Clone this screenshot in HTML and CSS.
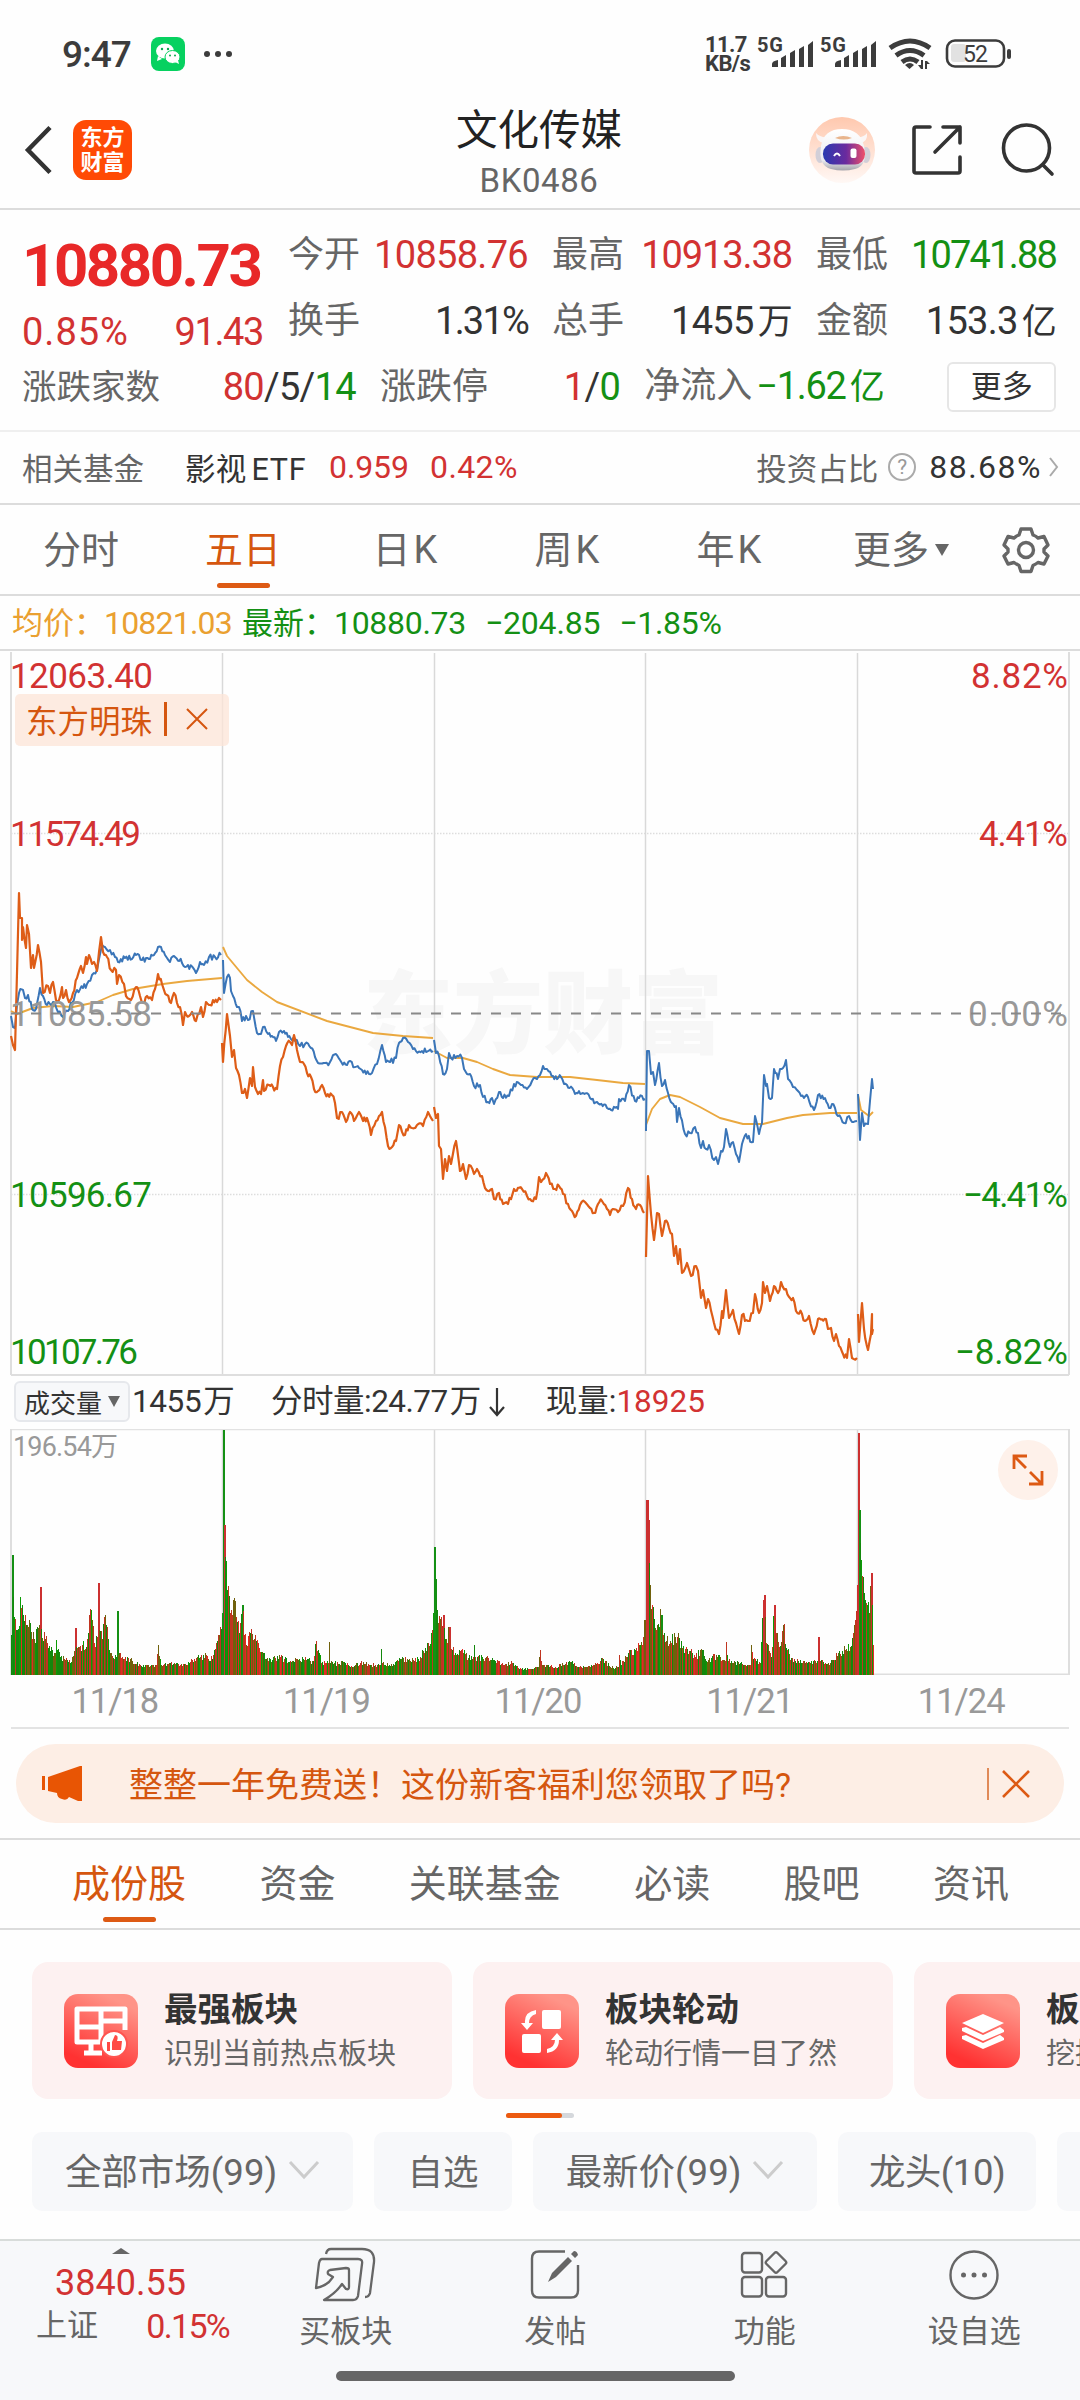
FILE: index.html
```html
<!DOCTYPE html>
<html lang="zh-CN">
<head>
    <meta charset="UTF-8">
    <meta name="viewport" content="width=device-width, initial-scale=1.0">
    <title>文化传媒 BK0486</title>
    <link rel="stylesheet" href="styles.css">
</head>
<body>
    <div class="status-bar">
        <span class="time">9:47</span>
        <svg class="wechat" width="34" height="34" viewBox="0 0 34 34">
            <rect width="34" height="34" rx="8" fill="#07d160"/>
            <ellipse cx="14" cy="14" rx="9" ry="7.5" fill="#fff"/>
            <path d="M7 19l-1 5 5-2z" fill="#fff"/>
            <ellipse cx="21.500" cy="20" rx="7.500" ry="6.500" fill="#fff" stroke="#07d160" stroke-width="1"/>
            <path d="M24 25l4 2-1-4z" fill="#fff"/>
            <g fill="#07a94e"><circle cx="11" cy="12" r="1.200"/><circle cx="17" cy="12" r="1.200"/><circle cx="19" cy="18.500" r="1"/><circle cx="24" cy="18.500" r="1"/></g>
        </svg>
        <svg class="dots" width="30" height="10" viewBox="0 0 30 10" fill="#3c3c3c"><circle cx="4" cy="5" r="3"/><circle cx="15" cy="5" r="3"/><circle cx="26" cy="5" r="3"/></svg>
        <div class="net-speed"><div>11.7</div><div>KB/s</div></div>
        <svg width="310" height="40" viewBox="755 34 310 40" fill="#3c3c3c">
            <g id="signal">
                <text x="757" y="52" class="sim" textLength="26">5G</text>
                <path d="M772 67v-3q0-3 6-4v7zM781 67v-9l5-3v12zM790 67v-14l5-3v17zM799 67v-18l5-3v21zM808 67v-22l5-4v26z"/>
            </g>
            <use href="#signal" x="63"/>
            <g fill="none" stroke="#3c3c3c" stroke-width="5">
                <path d="M890 48q20-14 40 0M896 55.500q14-10 28 0M902 62q8-6 16 0"/>
            </g>
            <path d="M905 65q5-4 9 0l-4.500 4zM923 60v9h-2l-3-4h3v-5zM925 61v8h2v-5h3l-3-3z"/>
            <rect x="951" y="44" width="15" height="18" rx="3" fill="#e2e2e2"/>
            <rect x="947" y="40.500" width="57" height="26" rx="8" fill="none" stroke="#3c3c3c" stroke-width="2.600"/>
            <rect x="1007" y="49" width="4" height="10" rx="2"/>
            <text x="963" y="62" class="battery" textLength="25">52</text>
        </svg>
    </div>

    <div class="navbar">
        <svg class="back" width="28" height="50" viewBox="0 0 28 50" fill="none" stroke="#333" stroke-width="4.500"><path d="M26 2.500L4 25l22 22.500"/></svg>
        <div class="logo">东方<br>财富</div>
        <div class="title">
            <h1>文化传媒</h1>
            <p>BK0486</p>
        </div>
        <svg class="robot" width="66" height="66" viewBox="0 0 66 66">
            <defs>
                <linearGradient id="halo" x2="0" y2="1"><stop offset="0" stop-color="#ffc8ae"/><stop offset="1" stop-color="#fff8f5"/></linearGradient>
                <linearGradient id="face"><stop offset="0" stop-color="#2a3ab0"/><stop offset=".55" stop-color="#6a2a9e"/><stop offset="1" stop-color="#f0506a"/></linearGradient>
                <linearGradient id="shell" x2="0" y2="1"><stop offset="0" stop-color="#fff"/><stop offset=".75" stop-color="#ececf0"/><stop offset="1" stop-color="#a3a3ab"/></linearGradient>
            </defs>
            <circle cx="33" cy="33" r="33" fill="url(#halo)"/>
            <path d="M7 16q0 9 8 10l5-6q-9 1-13-4zM58 16q1 9-7 10l-5-6q9 1 12-4z" fill="#fbf6f6"/>
            <ellipse cx="11" cy="38" rx="4.500" ry="8" fill="#d2cfd8"/>
            <ellipse cx="57" cy="38" rx="4.500" ry="8" fill="#d2cfd8"/>
            <path d="M12 29Q15 12 33 12t22 17q4 20-9 23-12 3-24 0Q9 49 12 29z" fill="url(#shell)"/>
            <path d="M26 21q8-4 17 0-8 3-17 0z" fill="#e8b48c"/>
            <rect x="14" y="26.500" width="42" height="21" rx="10" fill="url(#face)"/>
            <path d="M25 39q3-5 6 0" fill="none" stroke="#fff" stroke-width="2"/>
            <rect x="41.500" y="31.500" width="6" height="9.500" rx="2" fill="#fff"/>
        </svg>
        <svg class="share" width="54" height="54" viewBox="0 0 54 54" fill="none" stroke="#333" stroke-width="3.600" stroke-linecap="round" stroke-linejoin="round"><path d="M20 4H6q-2 0-2 2v42q0 2 2 2h42q2 0 2-2V34M33 4h17v16M50 4L25 29"/></svg>
        <svg class="search" width="54" height="54" viewBox="0 0 54 54" fill="none" stroke="#333" stroke-width="3.600" stroke-linecap="round"><circle cx="25.500" cy="25" r="23"/><path d="M42 42l9 9"/></svg>
    </div>

    <div class="quote">
        <div class="price">
            <div class="last red">10880.73</div>
            <div class="change red"><span class="pct">0.85%</span><span>91.43</span></div>
        </div>
        <div class="stats">
            <div class="stat"><label>今开</label><span class="red">10858.76</span></div>
            <div class="stat"><label>最高</label><span class="red high">10913.38</span></div>
            <div class="stat narrow"><label>最低</label><span class="green">10741.88</span></div>
            <div class="stat narrow"><label>换手</label><span>1.31%</span></div>
            <div class="stat"><label>总手</label><span>1455<i>万</i></span></div>
            <div class="stat"><label>金额</label><span>153.3<i>亿</i></span></div>
        </div>
        <div class="breadth">
            <div class="stat updown"><label>涨跌家数</label><span><b class="red">80</b>/5/<b class="green">14</b></span></div>
            <div class="stat limit"><label>涨跌停</label><span><b class="red">1</b>/<b class="green">0</b></span></div>
            <div class="stat inflow"><label>净流入</label><span class="green">−1.62<i>亿</i></span></div>
            <button class="more-btn">更多</button>
        </div>
    </div>

    <div class="fund">
        <label>相关基金</label>
        <span class="fund-name">影视<i>ETF</i></span>
        <span class="red fund-price">0.959</span>
        <span class="red fund-pct">0.42%</span>
        <div class="ratio">
            <label>投资占比</label>
            <span class="help">?</span>
            <span class="ratio-num">88.68%</span>
            <svg width="10" height="20" viewBox="0 0 10 20" fill="none" stroke="#aaa" stroke-width="2"><path d="M1 1l7 9-7 9"/></svg>
        </div>
    </div>

    <div class="period-tabs">
        <div class="tab">分时</div>
        <div class="tab active">五日</div>
        <div class="tab">日<i>K</i></div>
        <div class="tab">周<i>K</i></div>
        <div class="tab">年<i>K</i></div>
        <div class="tab">更多<svg width="14" height="12" viewBox="0 0 14 12"><path d="M0 0h14L7 12z" fill="#666"/></svg></div>
        <svg class="gear" width="48" height="48" viewBox="-24 -24 48 48" fill="none" stroke="#666" stroke-width="3.400" stroke-linejoin="round">
            <path d="M-5-21H5L7-15Q10-14 12-12L18-13.500 22-5 18-1V2L22 6 18 14 12 12.500Q10 14 7 15.500L5 21.500H-5L-7 15.500Q-10 14-12 12.500L-18 14-22 6-18 2V-1L-22-5-18-13.500-12-12Q-10-14-7-15z"/>
            <circle r="7.500"/>
        </svg>
    </div>

    <div class="legend">
        <span class="avg name">均价：</span><span class="avg avg-num">10821.03</span>
        <span class="green name">最新：</span><span class="green">10880.73</span>
        <span class="green diff">−204.85</span>
        <span class="green">−1.85%</span>
    </div>

    <div class="price-chart">
        <svg id="priceChart" width="1080" height="725" viewBox="0 650 1080 725">
            <text x="363" y="1045" class="watermark" textLength="360">东方财富</text>
            <path class="grid dotted" d="M11 832.500H1069M11 1193.500H1069"/>
            <path class="grid side" d="M11 651V1374M1069 651V1374"/>
            <path class="grid" d="M222.500 652V1374M434.500 652V1374M645.500 652V1374M857.500 652V1374"/>
            <path class="grid bottom" d="M11 1374H1069"/>
            <g id="lines"></g>
            <g class="axis">
                <text x="10" y="687" class="up" textLength="143">12063.40</text>
                <text x="10" y="845" class="up" textLength="131">11574.49</text>
                <text x="10" y="1025" class="flat" textLength="142">11085.58</text>
                <text x="10" y="1206" class="down" textLength="142">10596.67</text>
                <text x="10" y="1363" class="down" textLength="128">10107.76</text>
                <text x="971" y="687" class="up" textLength="97">8.82%</text>
                <text x="979" y="845" class="up" textLength="89">4.41%</text>
                <text x="968" y="1025" class="flat" textLength="100">0.00%</text>
                <text x="963" y="1206" class="down" textLength="105">−4.41%</text>
                <text x="955" y="1363" class="down" textLength="113">−8.82%</text>
            </g>
            <path d="M11 1012.500H1069" stroke="#888" stroke-width="1.800" stroke-dasharray="10 10"/>
        </svg>
        <div class="compare-tag">东方明珠<span class="bar"></span><svg width="22" height="22" viewBox="0 0 22 22" stroke="#d5560f" stroke-width="2"><path d="M1 1l20 20M21 1L1 21"/></svg></div>
    </div>

    <div class="volume-head">
        <button class="indicator">成交量<svg width="12" height="11" viewBox="0 0 12 11"><path d="M0 0h12L6 11z" fill="#666"/></svg></button>
        <span class="vol-total">1455<i>万</i></span>
        <span class="vol-minute">分时量:24.77<i>万</i></span>
        <svg class="arrow" width="16" height="30" viewBox="0 0 16 30" fill="none" stroke="#333" stroke-width="2.200"><path d="M8 1v27M1 20l7 8 7-8"/></svg>
        <span>现量:<b class="red">18925</b></span>
    </div>

    <div class="volume-chart">
        <svg width="1080" height="246" viewBox="0 1429 1080 246">
            <path class="grid" d="M222.500 1430V1675M434.500 1430V1675M645.500 1430V1675M857.500 1430V1675"/>
            <path class="grid light" d="M11 1429.500H1069"/>
            <path class="grid side" d="M11 1429V1675M1069 1429V1675M11 1674.500H1069"/>
            <g id="bars" shape-rendering="crispEdges"></g>
            <text x="13" y="1456" class="vol-max" textLength="105">196.54万</text>
        </svg>
        <div class="expand"><svg width="32" height="32" viewBox="0 0 32 32" fill="none" stroke="#dd5a14" stroke-width="2.800"><path d="M2 15V2h13M2 2l12 12M17 30h13V17M30 30L18 18"/></svg></div>
    </div>
    <div class="dates"><span>11/18</span><span>11/19</span><span>11/20</span><span>11/21</span><span>11/24</span></div>

    <div class="banner">
        <svg width="40" height="36" viewBox="0 0 40 36" fill="#e85504"><path d="M0 10h3v14H0zM6 11L38 0h2v35h-4l-9-4q-2 4-7 2-5-1-5-6l-9-2z"/></svg>
        <p>整整一年免费送！这份新客福利您领取了吗?</p>
        <span class="sep"></span>
        <svg class="close" width="30" height="30" viewBox="0 0 30 30" stroke="#dd5a14" stroke-width="2.600"><path d="M2 2l26 26M28 2L2 28"/></svg>
    </div>

    <div class="section-tabs">
        <div class="tab active">成份股</div>
        <div class="tab">资金</div>
        <div class="tab">关联基金</div>
        <div class="tab">必读</div>
        <div class="tab">股吧</div>
        <div class="tab">资讯</div>
    </div>

    <div class="cards">
        <div class="card">
            <div class="card-icon">
                <svg width="74" height="74" viewBox="0 0 74 74" fill="none" stroke="#fff" stroke-width="5">
                    <path d="M61 36V15H13v33h28M37 15v33M13 33h24M37 27h24M27 50v9M20 59h18" stroke-linejoin="round"/>
                    <circle cx="50" cy="50" r="13" fill="#fff" stroke="#ff5450" stroke-width="2"/>
                    <path d="M43 48h3v9h-3zM48 56v-8l3-7q4 0 2 6h5l-1 9z" fill="#ff4a45" stroke="none"/>
                </svg>
            </div>
            <div class="card-text"><h3>最强板块</h3><p>识别当前热点板块</p></div>
        </div>
        <div class="card">
            <div class="card-icon">
                <svg width="74" height="74" viewBox="0 0 74 74" fill="#fff">
                    <rect x="37" y="16" width="19" height="19" rx="2"/><rect x="17" y="40" width="19" height="19" rx="2"/>
                    <path d="M31 16q-12 2-11 13h-4l6 7 6-7h-4q0-7 7-9zM42 59q12-2 12-13h4l-6-7-6 7h4q0 7-8 9z"/>
                </svg>
            </div>
            <div class="card-text"><h3>板块轮动</h3><p>轮动行情一目了然</p></div>
        </div>
        <div class="card">
            <div class="card-icon">
                <svg width="74" height="74" viewBox="0 0 74 74" fill="#fff">
                    <path d="M37 20l21 9-21 10-21-10z"/><path d="M16 34l4-1 17 8 17-8 4 3v2L37 47 16 37zM16 42l4-1 17 8 17-8 4 3v2L37 55 16 45z"/>
                </svg>
            </div>
            <div class="card-text"><h3>板块</h3><p>挖掘</p></div>
        </div>
    </div>
    <div class="pager"><span></span></div>

    <div class="chips">
        <div class="chip market">全部市场(99)<svg width="32" height="20" viewBox="0 0 32 20" fill="none" stroke="#ccc" stroke-width="3"><path d="M2 2l14 15L30 2"/></svg></div>
        <div class="chip self">自选</div>
        <div class="chip latest">最新价(99)<svg width="32" height="20" viewBox="0 0 32 20" fill="none" stroke="#ccc" stroke-width="3"><path d="M2 2l14 15L30 2"/></svg></div>
        <div class="chip leader">龙头(10)</div>
        <div class="chip rest"></div>
    </div>

    <div class="bottom-bar">
        <div class="index">
            <svg width="18" height="6" viewBox="0 0 18 6"><path d="M9 0l9 6H0z" fill="#666"/></svg>
            <div class="index-value red">3840.55</div>
            <div class="index-row"><span>上证</span><span class="red">0.15%</span></div>
        </div>
        <div class="action">
            <svg width="64" height="56" viewBox="0 0 64 56" fill="none" stroke="#666" stroke-width="2.300" stroke-linejoin="round">
                <path d="M12 7q1-5 5-5h31q13 0 12 13l-4 31q-1 4-5 4M8 12h36q5 0 4 5l-4 32q-1 4-5 4H10Q22 46 28 37l4 5q3 1 3-2V23q0-2-3-2l-16 2q-3 1-2 4l5 3-4 5Q9 40 2 41L5 16q1-4 3-4z"/>
            </svg>
            <span>买板块</span>
        </div>
        <div class="action">
            <svg width="64" height="56" viewBox="0 0 64 56" fill="none" stroke="#666" stroke-width="2.400">
                <path d="M42 4.500H16q-7 0-7 7v32q0 7 7 7h32q7 0 7-7V18"/>
                <path d="M25 35l4-9L45 10l4 4-16 16zM48 7l3-3q3 0 4 4l-3 3z" fill="#666" stroke="none"/>
            </svg>
            <span>发帖</span>
        </div>
        <div class="action">
            <svg width="64" height="56" viewBox="0 0 64 56" fill="none" stroke="#666" stroke-width="2.400" stroke-linejoin="round">
                <rect x="9" y="6" width="20" height="19.500" rx="3"/><rect x="9" y="30" width="20" height="19.500" rx="3"/><rect x="33" y="30" width="20" height="19.500" rx="3"/>
                <path d="M41.500 6q1.500-1.500 3 0l8 8q1.500 1.500 0 3l-8 8q-1.500 1.500-3 0l-8-8q-1.500-1.500 0-3z"/>
            </svg>
            <span>功能</span>
        </div>
        <div class="action">
            <svg width="64" height="56" viewBox="0 0 64 56" fill="#666">
                <circle cx="32" cy="28" r="23.500" fill="none" stroke="#666" stroke-width="2.400"/>
                <circle cx="21.500" cy="28" r="2.500"/><circle cx="32" cy="28" r="2.500"/><circle cx="42.500" cy="28" r="2.500"/>
            </svg>
            <span>设自选</span>
        </div>
    </div>
    <div class="home"><span></span></div>

    <script src="chart.js"></script>
</body>
</html>
```

FILE: styles.css
```css
* {
    margin: 0;
    padding: 0;
    box-sizing: border-box;
}

body {
    width: 1080px;
    height: 2400px;
    overflow: hidden;
    background: #fefefe;
    color: #333;
    font-family: Roboto, "Noto Sans CJK SC", sans-serif;
}

svg {
    display: block;
    flex: none;
}

i, b {
    font-style: normal;
    font-weight: inherit;
}

button {
    font-family: inherit;
    color: #333;
}

.red { color: #d23232; }
.green { color: #149014; }

/* 状态栏 */
.status-bar {
    display: flex;
    align-items: center;
    height: 92px;
    padding: 16px 0 0 62px;
    color: #3c3c3c;
}

.time {
    width: 89px;
    font-size: 37px;
    font-weight: 500;
    letter-spacing: -1px;
}

.dots { margin-left: 18px; }

.net-speed {
    margin-left: 472px;
    width: 50px;
    font-size: 22px;
    line-height: 19px;
    font-weight: 700;
    letter-spacing: -0.6px;
}

.sim {
    font-size: 20px;
    font-weight: 700;
}

.battery { font-size: 23px; }

/* 导航栏 */
.navbar {
    display: flex;
    align-items: center;
    height: 118px;
    padding-left: 24px;
    border-bottom: 2px solid #dcdcdc;
}

.logo {
    margin-left: 21px;
    width: 59px;
    height: 60px;
    padding-top: 5px;
    border-radius: 13px;
    background: #ff4a05;
    color: #fff;
    font-size: 22px;
    line-height: 25px;
    font-weight: 700;
    text-align: center;
}

.title {
    width: 677px;
    padding-top: 9px;
    padding-left: 137px;
    text-align: center;
}

.title h1 {
    font-size: 41.5px;
    line-height: 52px;
    font-weight: 400;
    color: #222;
}

.title p {
    font-size: 33px;
    line-height: 48px;
    letter-spacing: 0.6px;
    color: #666;
}

.share { margin-left: 35px; }
.search { margin-left: 37px; }

/* 行情数据 */
.quote {
    display: grid;
    grid-template-columns: 241px 768px;
    column-gap: 25px;
    align-content: start;
    height: 222px;
    padding: 12px 23px 0 22px;
    border-bottom: 2px solid #efefef;
}

.price { padding-top: 11px; }

.last {
    color: #e82828;
    font-size: 60px;
    line-height: 66px;
    font-weight: 700;
    letter-spacing: -2.5px;
}

.change {
    display: flex;
    justify-content: space-between;
    font-size: 38px;
    line-height: 66px;
    letter-spacing: -1.4px;
}

.change .pct { letter-spacing: 1px; }

.stats {
    display: grid;
    grid-template-columns: repeat(3, 240px);
    column-gap: 24px;
    grid-auto-rows: 66px;
}

.stat {
    display: flex;
    justify-content: space-between;
    font-size: 38px;
    line-height: 66px;
    letter-spacing: -0.7px;
    white-space: nowrap;
}

.stat .high { letter-spacing: -1.1px; }
.stat.narrow { letter-spacing: -1.8px; }

.stat label {
    font-size: 36px;
    color: #666;
    letter-spacing: 0;
}

.stat i {
    font-size: 35px;
    margin-left: 4px;
}

.breadth {
    grid-column: 1 / 3;
    display: flex;
    align-items: center;
    height: 66px;
    margin-top: -11px;
}

.updown { width: 335px; }
.updown label { font-size: 34.5px; }
.limit { width: 241px; margin-left: 24px; }
.inflow { width: 240px; margin-left: 24px; letter-spacing: -1.3px; }

.more-btn {
    margin-left: 64px;
    width: 109px;
    height: 50px;
    border: 2px solid #e6e6e6;
    border-radius: 6px;
    background: #fff;
    font-size: 31px;
    line-height: 44px;
}

.fund {
    display: flex;
    align-items: center;
    height: 73px;
    padding: 0 21px 2px 22px;
    border-bottom: 2px solid #dcdcdc;
    font-size: 32px;
    letter-spacing: -0.1px;
}

.fund label {
    color: #666;
    font-size: 30.5px;
    letter-spacing: 0;
}

.fund-name {
    width: 144px;
    margin-left: 41px;
    font-size: 30.5px;
    letter-spacing: 0.2px;
}

.fund-name i { margin-left: 5px; letter-spacing: 0.8px; }
.fund-price { width: 101px; }
.fund-pct { letter-spacing: 0.4px; }

.ratio {
    display: flex;
    align-items: center;
    margin-left: auto;
}

.ratio-num { letter-spacing: 1.5px; }

.help {
    width: 28px;
    height: 28px;
    margin: 0 13px 0 10px;
    border: 2px solid #aaa;
    border-radius: 50%;
    color: #999;
    font-size: 21px;
    line-height: 24px;
    text-align: center;
}

.ratio svg { margin-left: 7px; }

/* 周期切换 */
.period-tabs {
    display: flex;
    align-items: center;
    height: 91px;
    border-bottom: 2px solid #dcdcdc;
}

.tab {
    position: relative;
    color: #666;
    font-size: 38px;
    line-height: 56px;
    text-align: center;
    white-space: nowrap;
}

.period-tabs .tab { width: 162px; }
.period-tabs .tab i { margin-left: 3px; }

.period-tabs .tab:nth-child(6) {
    display: flex;
    align-items: center;
    justify-content: center;
    width: 182px;
}

.period-tabs .tab svg { margin-left: 6px; }

.tab.active { color: #d5560f; }

.tab.active::after {
    content: "";
    position: absolute;
    left: 50%;
    bottom: -10px;
    width: 53px;
    height: 5px;
    margin-left: -26px;
    border-radius: 3px;
    background: #dd5a14;
}

.gear { margin-left: 10px; }

.legend {
    display: flex;
    height: 55px;
    padding-left: 12px;
    border-bottom: 2px solid #dcdcdc;
    font-size: 32px;
    line-height: 55px;
    letter-spacing: -0.3px;
    white-space: nowrap;
}

.legend .avg { color: #eaa030; }
.legend .name { width: 92px; font-size: 31px; letter-spacing: 0; }
.legend .avg-num { width: 138px; letter-spacing: -0.8px; }
.legend .diff { margin: 0 19px; letter-spacing: -0.2px; }

/* 分时图 */
.price-chart {
    position: relative;
    height: 724px;
}

.grid {
    fill: none;
    stroke: #d9d9d9;
    stroke-width: 1.5;
}

.grid.dotted {
    stroke: #ddd;
    stroke-dasharray: 1.5 1.5;
}

.grid.side, .grid.bottom {
    stroke: #dedede;
    stroke-width: 2;
}

.grid.light { stroke: #e2e2e2; }

.watermark {
    font-size: 90px;
    font-weight: 900;
    fill: #f7f7f7;
}

.axis { font-size: 35px; }
.axis .up { fill: #d23232; }
.axis .down { fill: #149014; }
.axis .flat { fill: #999; }

.compare-tag {
    position: absolute;
    left: 15px;
    top: 43px;
    display: flex;
    align-items: center;
    width: 214px;
    height: 52px;
    padding: 0 0 2px 11px;
    border-radius: 5px;
    background: rgba(252, 228, 215, .75);
    color: #d5560f;
    font-size: 31.5px;
}

.compare-tag .bar {
    width: 3px;
    height: 34px;
    margin: 0 19px 0 12px;
    background: #d5560f;
}

/* 成交量 */
.volume-head {
    display: flex;
    align-items: center;
    height: 54px;
    padding: 0 0 1px 14px;
    font-size: 31.5px;
    line-height: 40px;
    white-space: nowrap;
}

.indicator {
    display: flex;
    align-items: center;
    width: 116px;
    height: 41px;
    padding: 0 0 1px 8px;
    border: 2px solid #e6e8ec;
    border-radius: 6px;
    background: #f7f8fa;
    font-size: 26px;
}

.indicator svg { margin-left: 6px; }
.volume-head i { margin-left: 2px; }
.vol-total { width: 139px; margin-left: 2px; letter-spacing: -0.4px; }
.arrow { margin: 0 41px 0 8px; }
.vol-minute { letter-spacing: -0.5px; }

.volume-chart {
    position: relative;
    height: 246px;
}

.vol-max {
    font-size: 27px;
    fill: #999;
}

.expand {
    position: absolute;
    right: 22px;
    top: 11px;
    display: flex;
    align-items: center;
    justify-content: center;
    width: 60px;
    height: 60px;
    border-radius: 50%;
    background: #fef1ea;
}

.dates {
    display: grid;
    grid-template-columns: repeat(5, 1fr);
    height: 54px;
    margin: 0 11px 15px;
    border-bottom: 2px solid #e3e3e3;
    color: #999;
    font-size: 34.5px;
    line-height: 53px;
    letter-spacing: -1px;
    text-align: center;
}

.dates span { padding-right: 4px; }

.banner {
    display: flex;
    align-items: center;
    width: 1048px;
    height: 79px;
    margin: 0 16px 15px;
    padding-left: 26px;
    border-radius: 40px;
    background: #fdeee5;
    color: #d5560f;
}

.banner p {
    width: 905px;
    padding: 0 0 2px 47px;
    font-size: 34px;
}

.banner .sep {
    width: 2px;
    height: 32px;
    margin: 0 12px 0 0;
    background: #e08a58;
}

.section-tabs {
    display: flex;
    align-items: center;
    justify-content: space-between;
    height: 92px;
    padding: 0 71px 0 72px;
    border-top: 2px solid #dcdcdc;
    border-bottom: 2px solid #dcdcdc;
}

/* 功能卡片 */
.cards {
    display: flex;
    gap: 21px;
    width: 1080px;
    padding: 32px 0 0 32px;
    overflow: hidden;
}

.card {
    display: flex;
    flex: none;
    align-items: center;
    width: 420px;
    height: 137px;
    padding-left: 32px;
    border-radius: 16px;
    background: #fdf1f1;
}

.card-icon {
    width: 74px;
    height: 74px;
    border-radius: 14px;
    background: linear-gradient(25deg, #ff3232 15%, #ff9488 85%);
}

.card-text { margin-left: 26px; }

.card h3 {
    font-size: 33.5px;
    line-height: 46px;
    font-weight: 700;
}

.card p {
    font-size: 29px;
    line-height: 42px;
    color: #666;
}

.pager {
    width: 68px;
    height: 5px;
    margin: 14px auto;
    border-radius: 3px;
    background: #d5d8dc;
}

.pager span {
    display: block;
    width: 56px;
    height: 5px;
    border-radius: 3px;
    background: #ec5a10;
}

.chips {
    display: flex;
    gap: 21px;
    width: 1080px;
    padding-left: 32px;
    overflow: hidden;
}

.chip {
    display: flex;
    flex: none;
    align-items: center;
    justify-content: center;
    height: 79px;
    padding-bottom: 5px;
    border-radius: 10px;
    background: #f7f8fa;
    color: #666;
    font-size: 36.5px;
}

.chip svg { margin: 2px 0 0 11px; }
.market { width: 321px; }
.self { width: 138px; font-size: 35.5px; }
.latest { width: 284px; }
.leader { width: 198px; letter-spacing: -0.5px; }
.rest { width: 200px; }

/* 底部操作栏 */
.bottom-bar {
    display: flex;
    height: 121px;
    margin-top: 28px;
    padding-left: 30px;
    border-top: 2px solid #d8dcda;
    background: #f7f8fa;
    color: #666;
}

.index {
    display: flex;
    flex-direction: column;
    align-items: center;
    width: 211px;
    padding: 7px 12px 0 6px;
}

.index svg { margin-right: 24px; }

.index-value {
    margin: 7px 24px 0 0;
    font-size: 36px;
    line-height: 44px;
}

.index-row {
    display: flex;
    justify-content: space-between;
    width: 193px;
    font-size: 31px;
    line-height: 42px;
}

.index-row .red {
    font-size: 34px;
    letter-spacing: -1.7px;
}

.action {
    display: flex;
    flex-direction: column;
    align-items: center;
    width: 209.5px;
    padding-top: 6px;
    font-size: 31px;
    line-height: 44px;
}

.action span { margin-top: 7px; }

.home {
    height: 42px;
    padding-top: 11px;
    background: #f7f8fa;
}

.home span {
    display: block;
    width: 399px;
    height: 10px;
    margin-left: 336px;
    border-radius: 5px;
    background: #666;
}
```

FILE: chart.js
```js
const NS = 'http://www.w3.org/2000/svg';

// 均价线
const avg = [
    '11,1010 17,1013 33,1007 53,1005 73,1006 97,1001 113,994 133,988 163,983 187,980 222,977',
    '223,946 227,955 247,979 262,991 277,1001 327,1020 373,1032 403,1035 433,1037',
    '434,1050 447,1057 463,1057 477,1061 493,1068 510,1074 537,1076 570,1076 597,1079 623,1082 645,1083',
    '646,1124 652,1108 660,1098 670,1094 680,1096 700,1106 720,1117 743,1123 763,1123 787,1117 803,1114 830,1112 857,1112',
    '858,1094 861,1109 869,1115 873,1111'
];

// 板块指数
const price = [
    '11,1015 13,1026 15,1027 17,1004 19,992 23,989 25,997 28,994 32,1008 36,1008 40,987 43,995 47,1004 53,1001 58,1011 63,1016 68,1010 72,1002 77,989 83,987 87,983 92,974 97,969 99,958 102,944 105,946 110,949 115,956 118,961 125,957 132,958 136,954 142,959 150,958 154,954 158,946 161,946 165,954 170,961 174,955 182,962 188,964 196,972 200,961 204,964 209,956 215,956 221,954',
    '223,959 224,992 227,976 230,977 231,990 233,995 237,1006 239,1006 242,1020 246,1015 248,1019 253,1010 257,1032 261,1033 263,1026 268,1033 272,1035 276,1040 279,1031 284,1030 288,1036 295,1040 300,1045 305,1043 311,1047 315,1056 318,1062 325,1062 330,1061 336,1053 340,1059 347,1064 350,1060 355,1066 362,1069 366,1073 372,1072 377,1063 382,1044 386,1061 390,1061 396,1057 399,1042 403,1037 408,1041 413,1048 422,1050 433,1050',
    '434,1039 436,1052 439,1055 443,1073 447,1068 449,1052 451,1057 457,1055 462,1057 464,1068 470,1073 474,1085 480,1084 483,1096 488,1101 492,1097 494,1103 499,1091 503,1097 509,1095 514,1083 521,1084 527,1088 532,1080 537,1078 540,1074 543,1065 547,1068 553,1075 561,1076 567,1084 575,1093 583,1092 590,1097 597,1101 607,1107 618,1108 619,1098 625,1100 629,1084 635,1100 639,1097 645,1098',
    '646,1130 647,1050 649,1050 651,1073 653,1071 655,1084 659,1062 662,1085 665,1079 668,1092 672,1102 676,1105 677,1121 679,1107 685,1133 690,1132 695,1126 698,1132 701,1147 703,1140 706,1148 709,1144 714,1159 716,1156 718,1163 721,1150 724,1146 726,1128 730,1146 733,1141 739,1161 742,1143 746,1133 753,1141 755,1115 759,1133 762,1122 764,1074 766,1085 767,1083 769,1097 772,1097 774,1068 778,1078 780,1068 783,1067 786,1059 788,1078 793,1086 798,1090 804,1097 808,1096 814,1109 818,1094 825,1097 829,1107 832,1103 835,1107 838,1115 844,1122 849,1115 852,1121 857,1120',
    '858,1093 860,1139 862,1112 864,1125 868,1123 870,1100 872,1078 873,1088'
];

// 东方明珠
const compare = [
    '11,1035 13,1044 15,1049 17,972 19,892 20,917 22,917 22,939 23,926 26,947 27,924 29,933 31,967 33,954 34,967 38,944 41,961 43,992 48,985 50,992 53,981 56,999 59,999 62,986 63,997 66,989 69,1001 73,992 77,977 81,965 83,972 86,956 87,963 89,954 92,963 94,961 97,970 99,951 101,936 103,951 107,956 111,969 116,969 117,983 119,974 124,983 126,995 131,999 136,986 140,995 143,1002 147,995 152,999 155,988 158,973 162,983 167,994 171,1002 174,992 177,1002 180,1006 183,1024 185,1011 189,1015 192,1011 196,1020 201,1006 203,1016 206,1001 210,1004 213,999 217,1001 219,997 221,999',
    '222,1042 223,1061 227,1013 230,1035 232,1056 234,1049 236,1067 239,1074 242,1092 245,1088 247,1097 250,1077 252,1085 253,1066 255,1086 258,1093 261,1093 263,1079 264,1090 269,1084 273,1086 277,1088 280,1065 283,1056 286,1045 290,1041 292,1044 294,1034 297,1049 300,1061 304,1063 307,1072 311,1076 314,1088 318,1090 322,1084 325,1092 332,1094 335,1102 337,1117 342,1111 346,1121 350,1111 354,1120 359,1111 363,1120 367,1117 371,1134 376,1120 382,1111 385,1126 388,1145 392,1146 396,1140 399,1124 405,1134 409,1124 412,1127 417,1124 423,1125 428,1111 430,1115 433,1120',
    '434,1106 436,1117 438,1113 439,1145 441,1148 443,1178 445,1158 447,1170 449,1155 451,1163 456,1140 460,1170 463,1163 466,1178 469,1164 474,1173 477,1168 482,1175 485,1187 488,1190 492,1188 494,1198 499,1192 503,1203 508,1203 514,1188 522,1188 527,1195 530,1198 536,1198 539,1176 541,1181 546,1172 550,1183 555,1188 559,1185 563,1193 568,1203 572,1210 576,1215 580,1204 585,1201 590,1207 594,1212 598,1203 602,1200 607,1208 610,1214 613,1208 618,1211 623,1205 628,1187 632,1198 636,1208 640,1204 644,1212',
    '646,1256 648,1175 651,1213 654,1239 657,1212 659,1213 662,1235 665,1220 669,1227 672,1233 674,1255 676,1245 678,1263 680,1248 682,1272 687,1262 691,1275 696,1265 698,1270 701,1297 703,1289 706,1307 708,1298 714,1322 719,1333 722,1310 723,1317 726,1289 729,1317 733,1309 736,1322 739,1333 742,1314 748,1320 753,1312 755,1293 759,1312 762,1302 763,1281 765,1292 767,1285 770,1300 774,1285 778,1292 781,1281 786,1288 790,1297 793,1297 796,1310 802,1313 805,1320 809,1315 814,1333 818,1318 826,1318 828,1328 831,1327 834,1340 836,1333 839,1345 843,1353 847,1357 849,1338 852,1357 857,1357',
    '858,1313 859,1341 862,1302 864,1328 868,1349 871,1333 872,1313 872,1333 873,1328'
];

// 成交量轮廓 x:高度
const volume = '11:40 12:120 13:78 14:58 18:46 20:78 23:60 26:50 30:52 34:36 37:48 39:50 40:88 41:46 47:32 52:25 54:22 56:35 60:18 65:15 70:12 74:24 75:47 76:28 82:30 86:28 89:60 92:55 94:32 97:38 98:92 99:45 102:36 104:58 106:50 109:25 116:18 117:64 118:20 125:18 132:14 140:10 150:9 156:10 158:30 161:10 170:12 180:10 190:13 197:18 206:20 212:16 218:40 222:62 223:245 224:150 225:118 227:85 230:62 232:60 233:75 236:58 239:42 242:70 244:40 246:30 250:42 256:34 263:22 270:16 280:18 290:14 303:16 313:14 316:34 319:22 321:12 328:12 329:33 330:12 345:12 352:8 360:12 370:10 380:10 381:26 382:12 390:9 400:16 410:14 420:18 428:32 431:42 433:62 434:128 436:75 438:52 440:56 443:60 446:36 449:48 452:25 456:20 462:26 468:17 473:18 474:30 475:18 488:17 495:14 504:10 512:12 520:7 530:6 538:8 540:25 542:10 555:8 572:14 577:8 590:8 603:16 610:8 618:8 619:20 621:10 628:22 635:25 640:30 643:38 645:55 646:175 647:175 648:155 649:112 650:90 652:70 654:56 657:50 661:60 664:42 670:34 677:38 685:26 690:24 695:18 700:25 708:15 718:20 722:15 725:14 726:33 728:14 740:12 750:10 751:30 753:16 760:12 763:75 764:80 766:32 771:18 774:70 777:42 779:28 783:50 787:25 790:15 800:15 810:12 817:14 818:38 820:14 830:12 838:22 845:25 850:28 853:42 855:55 857:90 858:242 859:165 861:115 863:98 865:75 867:70 869:62 871:102 872:70 873:30';

function drawLines(days, color, width) {
    const group = document.getElementById('lines');
    days.forEach(points => {
        const line = document.createElementNS(NS, 'polyline');
        line.setAttribute('points', days === avg ? points : addTicks(points));
        line.setAttribute('fill', 'none');
        line.setAttribute('stroke', color);
        line.setAttribute('stroke-width', width);
        line.setAttribute('stroke-linejoin', 'round');
        group.appendChild(line);
    });
}

let seed = 17;
function rand() {
    seed = (seed * 16807) % 2147483647;
    return seed / 2147483647;
}

// 在两个关键点之间补上逐分钟的小波动
function addTicks(points) {
    const list = points.split(' ').map(p => p.split(',').map(Number));
    const out = [list[0].join(',')];
    for (let i = 1; i < list.length; i++) {
        const [x0, y0] = list[i - 1];
        const [x1, y1] = list[i];
        const steps = Math.floor((x1 - x0) / 1.3);
        for (let s = 1; s < steps; s++) {
            const t = s / steps;
            out.push((x0 + (x1 - x0) * t).toFixed(1) + ',' + (y0 + (y1 - y0) * t + (rand() - 0.5) * 6).toFixed(1));
        }
        out.push(x1 + ',' + y1);
    }
    return out.join(' ');
}

function drawVolume() {
    const group = document.getElementById('bars');
    const list = volume.split(' ').map(p => p.split(':').map(Number));
    const greens = [12, 117, 222, 223, 242, 434, 435, 661, 859];
    const reds = [40, 75, 98, 224, 443, 449, 646, 647, 648, 763, 764, 774, 818, 857, 858, 871];
    let k = 0;
    let red = false;
    for (let x = 11; x <= 873; x++) {
        while (k < list.length - 2 && list[k + 1][0] <= x) k++;
        const [x0, h0] = list[k];
        const [x1, h1] = list[k + 1];
        let h = h0 + (h1 - h0) * (x - x0) / (x1 - x0);
        if (x !== x0 && x !== x1) h *= 0.78 + rand() * 0.4;
        if (rand() < 0.5) red = !red;
        let color = red ? '#c03420' : '#13880c';
        const mix = rand();
        if (mix < 0.28) color = '#70610c';
        else if (mix < 0.42) color = red ? '#e32a24' : '#0b9c05';
        if (greens.includes(x)) color = '#149014';
        if (reds.includes(x)) color = '#cc3030';
        const bar = document.createElementNS(NS, 'rect');
        bar.setAttribute('x', x);
        bar.setAttribute('y', 1675 - Math.round(h));
        bar.setAttribute('width', greens.includes(x) || reds.includes(x) ? 2 : 1);
        bar.setAttribute('height', Math.round(h));
        bar.setAttribute('fill', color);
        group.appendChild(bar);
    }
}

drawLines(avg, '#eaa83f', 1.9);
drawLines(price, '#3a75b8', 2);
drawLines(compare, '#de5d17', 2.2);
drawVolume();
```
